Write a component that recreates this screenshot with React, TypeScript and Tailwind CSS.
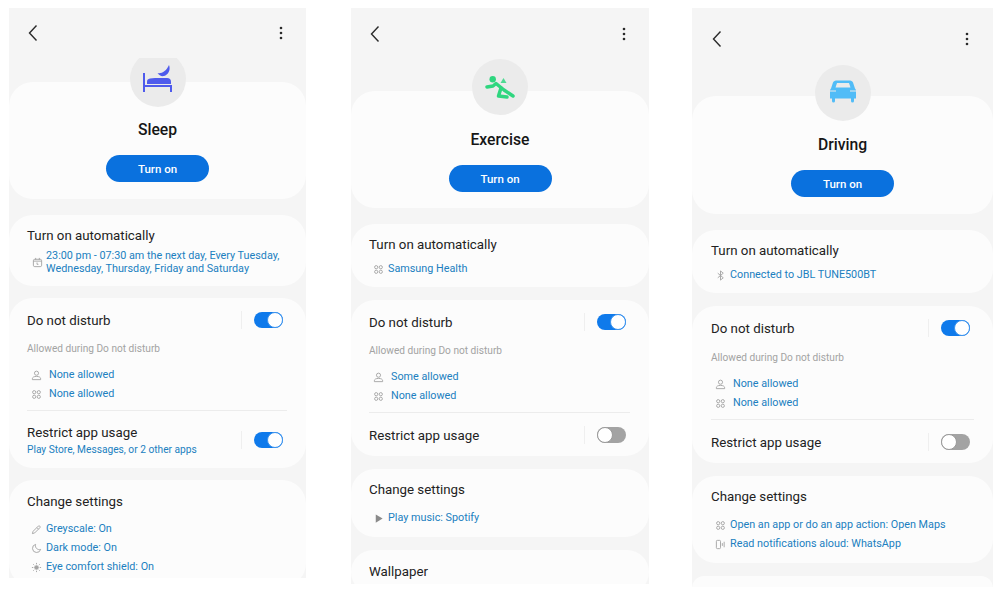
import { ReactNode } from 'react';

const Chevron = () => (
  <svg width="12" height="18" viewBox="0 0 12 18" fill="none" stroke="#2a2a2a" strokeWidth="1.4">
    <path d="M9.5 1.5 2.5 9l7 7.5" />
  </svg>
);

const Dots = () => (
  <svg width="4" height="14" viewBox="0 0 4 14" fill="#2a2a2a">
    <circle cx="2" cy="2" r="1.3" />
    <circle cx="2" cy="7" r="1.3" />
    <circle cx="2" cy="12" r="1.3" />
  </svg>
);

const BedIcon = () => (
  <svg width="32" height="30" viewBox="1 0 32 30" fill="#4f5bec">
    <rect x="2" y="9" width="2" height="19" />
    <rect x="2" y="21" width="29" height="2" />
    <rect x="29" y="21" width="2" height="7" />
    <path d="M6 20v-2.500q0-2.500 3-3l5-.500h12q4 0 4 4v2z" />
    <path d="M28 1c2 5-1 10-5 11-2.500 .5-5-.5-6.500-3 4 1 9-2 11.500-8z" />
  </svg>
);

const RunnerIcon = () => (
  <svg width="32" height="32" viewBox="0 0 32 32" fill="none" stroke="#2fd67f" strokeWidth="3.500" strokeLinecap="round" strokeLinejoin="round">
    <circle cx="8.700" cy="8.300" r="3.200" fill="#2fd67f" stroke="none" />
    <polygon points="16.500,12 19.500,7 22.500,12" fill="#4fda93" stroke="none" />
    <polyline points="3,16 9,15 12,12.500 20,19 29,25" />
    <polyline points="17,17 14.500,25 23,26" />
  </svg>
);

const CarIcon = () => (
  <svg width="32" height="28" viewBox="0 1.500 32 28">
    <path
      fill="#51bcf7"
      d="M9 3h14c1.500 0 2.500 1 3 2l2 6c1 1 1 2 1 3v7h-2v2.500a1.500 1.500 0 0 1-3 0V21H8v2.500a1.500 1.500 0 0 1-3 0V21H3v-7c0-1 0-2 1-3l2-6c.5-1 1.500-2 3-2z"
    />
    <path fill="#ebebeb" d="M10 5.500h12l1.500 4.500h-15z" />
    <path fill="#ebebeb" d="M3 13h6v1H3zM23 13h6v1h-6z" />
  </svg>
);

const small = {
  width: 11,
  height: 11,
  viewBox: '0 0 24 24',
  fill: 'none',
  stroke: '#a3a3a3',
  strokeWidth: 2,
};

const PersonIcon = () => (
  <svg {...small}>
    <circle cx="12" cy="7" r="4.500" />
    <path d="M3 21v-2c0-3 3-5 9-5s9 2 9 5v2z" />
  </svg>
);

const AppsIcon = () => (
  <svg {...small}>
    <circle cx="7" cy="7" r="3.500" />
    <circle cx="17" cy="7" r="3.500" />
    <circle cx="7" cy="17" r="3.500" />
    <circle cx="17" cy="17" r="3.500" />
  </svg>
);

const CalendarIcon = () => (
  <svg {...small}>
    <rect x="3" y="5" width="18" height="16" rx="3" />
    <path d="M8 2v4M16 2v4M3 9h18M11 12v4h3" />
  </svg>
);

const PencilIcon = () => (
  <svg {...small}>
    <path d="M3 21l1.500-5L16 4.500a2.500 2.500 0 0 1 3.500 3.500L8 19.500z" />
    <path d="M13 8l3.500 3.500" />
  </svg>
);

const MoonIcon = () => (
  <svg {...small}>
    <path d="M10 3a9 9 0 1 0 11 11c-6 2-13-3-11-11z" />
  </svg>
);

const SunIcon = () => (
  <svg {...small}>
    <circle cx="12" cy="12" r="4" fill="#a3a3a3" />
    <path d="M12 2v3M12 19v3M2 12h3M19 12h3M5 5l2 2M17 17l2 2M5 19l2-2M17 7l2-2" />
  </svg>
);

const PlayIcon = () => (
  <svg {...small} fill="#8a8a8a" stroke="none">
    <path d="M6 3l15 9-15 9z" />
  </svg>
);

const BluetoothIcon = () => (
  <svg {...small}>
    <path d="M6 7l12 10-6 5V2l6 5L6 17" />
  </svg>
);

const ReadIcon = () => (
  <svg {...small}>
    <rect x="3" y="3" width="9" height="18" rx="2" />
    <path d="M16 9v6M20 6v12" />
  </svg>
);

const Toggle = ({ on }: { on: boolean }) => (
  <div className="flex items-center flex-none">
    <div className="w-px h-[18px] bg-[#efefef] mr-3" />
    <div
      className={
        on
          ? 'flex justify-end w-[29px] h-4 mr-1 rounded-full bg-[#0f7aeb]'
          : 'flex justify-start w-[29px] h-4 mr-1 rounded-full bg-[#a3a3a3]'
      }
    >
      <div
        className={
          on
            ? 'w-4 h-4 rounded-full bg-white border border-[#3b93ee]'
            : 'w-4 h-4 rounded-full bg-white border border-[#9a9a9a]'
        }
      />
    </div>
  </div>
);

const Card = ({ className, children }: { className: string; children: ReactNode }) => (
  <section className={`bg-[#fcfcfc] rounded-[24px] flex-none ${className}`}>{children}</section>
);

const Title = ({ children }: { children: ReactNode }) => (
  <h3 className="h-[18px] text-[13.300px] leading-[20px] text-[#222]">{children}</h3>
);

const LinkRow = ({ icon, text, wide }: { icon: ReactNode; text: string; wide?: boolean }) => (
  <div className="flex items-center h-[19px]">
    <span className={wide ? 'flex flex-none w-[22px] pl-[4px]' : 'flex flex-none w-[19px] pl-[4px]'}>{icon}</span>
    <span className="text-[10.800px] text-[#207fc0] whitespace-nowrap">{text}</span>
  </div>
);

type PhoneProps = {
  width: string;
  height: string;
  header: string;
  clip: string;
  overlap: string;
  gap: string;
  hero: string;
  pad: string;
  allowedGap: string;
  icon: ReactNode;
  name: string;
  auto: ReactNode;
  people: string;
  restrict?: string;
  settings: ReactNode;
  tail?: ReactNode;
};

const Phone = (p: PhoneProps) => (
  <div className={`flex flex-col flex-none overflow-hidden bg-[#f5f5f5] ${p.width} ${p.height}`}>
    <header className={`flex items-center justify-between flex-none ${p.header}`}>
      <Chevron />
      <Dots />
    </header>
    <div className={`relative z-10 flex justify-center flex-none overflow-hidden ${p.clip} ${p.overlap}`}>
      <div className={`flex items-center justify-center flex-none w-14 h-14 rounded-full bg-[#ebebeb] ${p.clip === 'h-[49px]' ? '-mt-[7px]' : ''}`}>
        {p.icon}
      </div>
    </div>
    <Card className={`flex flex-col items-center mb-4 ${p.hero}`}>
      <h2 className="text-[15.700px] leading-[22px] font-medium text-[#161616]">{p.name}</h2>
      <button className="mt-[14px] w-[103px] h-[27px] pt-[2px] rounded-full bg-[#0a71de] text-white text-[11.500px] font-medium">
        Turn on
      </button>
    </Card>
    <div className={`flex flex-col ${p.gap}`}>
      {p.auto}
      <Card className={`pt-[13px] pb-3 pr-[19px] ${p.pad}`}>
        <div className="flex items-center justify-between h-[18px]">
          <Title>Do not disturb</Title>
          <Toggle on />
        </div>
        <p className={`text-[10.150px] leading-[13px] text-[#a3a3a3] ${p.allowedGap}`}>Allowed during Do not disturb</p>
        <div className="mt-[11px]">
          <LinkRow wide icon={<PersonIcon />} text={p.people} />
          <LinkRow wide icon={<AppsIcon />} text="None allowed" />
        </div>
        <div className={p.restrict ? 'h-px mt-[6px] mb-3 bg-[#ececec]' : 'h-px mt-[6px] mb-[13px] bg-[#ececec]'} />
        <div className="flex items-center justify-between">
          <div>
            <Title>Restrict app usage</Title>
            {p.restrict && <p className="mt-[2px] text-[10.200px] leading-[13px] text-[#207fc0]">{p.restrict}</p>}
          </div>
          <Toggle on={!!p.restrict} />
        </div>
      </Card>
      {p.settings}
      {p.tail}
    </div>
  </div>
);

export default function App() {
  return (
    <div className="flex items-start gap-[43px] w-[1000px] h-[597px] pt-2 pl-[9px] bg-white font-['Roboto',sans-serif] overflow-hidden">
      <Phone
        width="w-[297px] mr-[2px]"
        height="h-[570px]"
        header="h-[50px] pl-[18px] pr-[23px]"
        clip="h-[49px]"
        overlap="-mb-[25px]"
        gap="gap-3"
        hero="pt-[37px] pb-[17px]"
        pad="pl-[18px]"
        allowedGap="mt-[13px]"
        icon={<BedIcon />}
        name="Sleep"
        people="None allowed"
        restrict="Play Store, Messages, or 2 other apps"
        auto={
          <Card className="pt-[11px] pb-[11px] pl-[18px] pr-[19px]">
            <Title>Turn on automatically</Title>
            <div className="flex items-center mt-[5px]">
              <span className="flex flex-none w-[19px] pl-[5px]">
                <CalendarIcon />
              </span>
              <p className="text-[10.800px] leading-[13px] text-[#207fc0]">
                23:00 pm - 07:30 am the next day, Every Tuesday,
                <br />
                Wednesday, Thursday, Friday and Saturday
              </p>
            </div>
          </Card>
        }
        settings={
          <Card className="pt-[12px] pl-[18px] pr-[19px] pb-[10px]">
            <Title>Change settings</Title>
            <div className="mt-[10px]">
              <LinkRow icon={<PencilIcon />} text="Greyscale: On" />
              <LinkRow icon={<MoonIcon />} text="Dark mode: On" />
              <LinkRow icon={<SunIcon />} text="Eye comfort shield: On" />
            </div>
          </Card>
        }
      />
      <Phone
        width="w-[298px]"
        height="h-[576px]"
        header="h-[51px] pl-[18px] pr-[23px]"
        clip="h-14"
        overlap="-mb-6"
        gap="gap-[13px]"
        hero="pt-[38px] pb-4"
        pad="pl-[18px]"
        allowedGap="mt-[13px]"
        icon={<RunnerIcon />}
        name="Exercise"
        people="Some allowed"
        auto={
          <Card className="pt-[11px] pb-2 pl-[18px] pr-[19px]">
            <Title>Turn on automatically</Title>
            <div className="mt-[7px]">
              <LinkRow icon={<AppsIcon />} text="Samsung Health" />
            </div>
          </Card>
        }
        settings={
          <Card className="pt-[11px] pl-[18px] pr-[19px] pb-[9px]">
            <Title>Change settings</Title>
            <div className="mt-[11px]">
              <LinkRow icon={<PlayIcon />} text="Play music: Spotify" />
            </div>
          </Card>
        }
        tail={
          <Card className="pt-3 pl-[18px] pb-[14px]">
            <Title>Wallpaper</Title>
          </Card>
        }
      />
      <Phone
        width="w-[301px]"
        height="h-[579px]"
        header="h-[57px] pt-[5px] pl-[19px] pr-6"
        clip="h-14"
        overlap="-mb-[25px]"
        gap="gap-[13px]"
        hero="pt-[38px] pb-[17px]"
        pad="pl-[19px]"
        allowedGap="mt-[14px]"
        icon={<CarIcon />}
        name="Driving"
        people="None allowed"
        auto={
          <Card className="pt-[11px] pb-2 pl-[19px] pr-[19px]">
            <Title>Turn on automatically</Title>
            <div className="mt-[7px]">
              <LinkRow icon={<BluetoothIcon />} text="Connected to JBL TUNE500BT" />
            </div>
          </Card>
        }
        settings={
          <Card className="pt-[11px] pl-[19px] pr-[19px] pb-[9px]">
            <Title>Change settings</Title>
            <div className="mt-[11px]">
              <LinkRow icon={<AppsIcon />} text="Open an app or do an app action: Open Maps" />
              <LinkRow icon={<ReadIcon />} text="Read notifications aloud: WhatsApp" />
            </div>
          </Card>
        }
        tail={<Card className="h-6">{null}</Card>}
      />
    </div>
  );
}
